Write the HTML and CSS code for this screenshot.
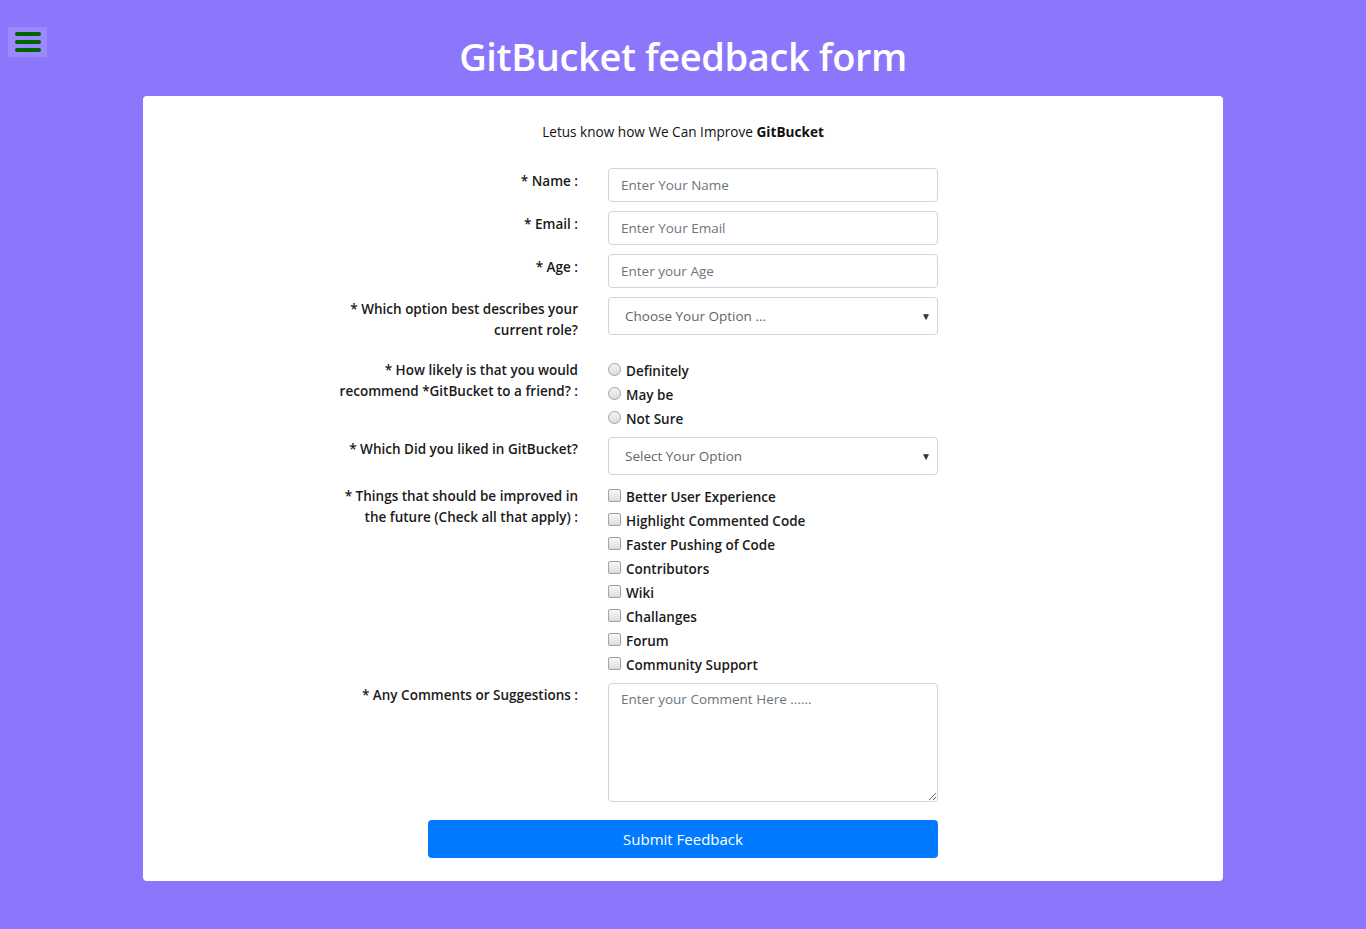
FILE: index.html
```html
<!DOCTYPE html>
<html lang="en">
<head>
<meta charset="utf-8">
<title>GitBucket feedback form</title>
<link rel="stylesheet" href="styles.css">
</head>
<body>
<button class="menu-btn" type="button" aria-label="Menu">
  <span class="bar"></span><span class="bar"></span><span class="bar"></span>
</button>
<h1 class="title">GitBucket feedback form</h1>
<main class="card">
  <p class="intro">Letus know how We Can Improve <b>GitBucket</b></p>
  <form class="form">
    <div class="row">
      <label class="lbl" for="name">* Name :</label>
      <input class="field" id="name" type="text" placeholder="Enter Your Name">
    </div>
    <div class="row">
      <label class="lbl" for="email">* Email :</label>
      <input class="field" id="email" type="email" placeholder="Enter Your Email">
    </div>
    <div class="row">
      <label class="lbl" for="age">* Age :</label>
      <input class="field" id="age" type="text" placeholder="Enter your Age">
    </div>
    <div class="row row-select">
      <label class="lbl" for="role">* Which option best describes your current role?</label>
      <div class="select"><span>Choose Your Option ...</span><i class="caret">▼</i></div>
    </div>
    <div class="row row-list">
      <div class="lbl">* How likely is that you would recommend *GitBucket to a friend? :</div>
      <div class="opts">
        <label class="opt"><span class="radio"></span>Definitely</label>
        <label class="opt"><span class="radio"></span>May be</label>
        <label class="opt"><span class="radio"></span>Not Sure</label>
      </div>
    </div>
    <div class="row row-select2">
      <label class="lbl">* Which Did you liked in GitBucket?</label>
      <div class="select"><span>Select Your Option</span><i class="caret">▼</i></div>
    </div>
    <div class="row row-list2">
      <div class="lbl">* Things that should be improved in the future (Check all that apply) :</div>
      <div class="opts">
        <label class="opt"><span class="check"></span>Better User Experience</label>
        <label class="opt"><span class="check"></span>Highlight Commented Code</label>
        <label class="opt"><span class="check"></span>Faster Pushing of Code</label>
        <label class="opt"><span class="check"></span>Contributors</label>
        <label class="opt"><span class="check"></span>Wiki</label>
        <label class="opt"><span class="check"></span>Challanges</label>
        <label class="opt"><span class="check"></span>Forum</label>
        <label class="opt"><span class="check"></span>Community Support</label>
      </div>
    </div>
    <div class="row row-text">
      <label class="lbl" for="comment">* Any Comments or Suggestions :</label>
      <textarea class="area" id="comment" placeholder="Enter your Comment Here ......"></textarea>
    </div>
    <div class="submit-row">
      <button class="submit" type="button">Submit Feedback</button>
    </div>
  </form>
</main>
</body>
</html>
```

FILE: styles.css
```css
* { box-sizing: border-box; }
html, body { margin: 0; padding: 0; }
body {
  background: #8c77fc;
  font-family: "Open Sans", "Noto Sans", sans-serif;
  color: #212529;
  position: relative;
  min-height: 929px;
}
.menu-btn {
  position: absolute;
  left: 8px;
  top: 27px;
  width: 39px;
  height: 30px;
  border: 0;
  padding: 0;
  background: rgba(255, 255, 255, 0.13);
  display: flex;
  flex-direction: column;
  align-items: center;
  justify-content: center;
  gap: 4px;
}
.bar {
  display: block;
  width: 26px;
  height: 4px;
  border-radius: 2px;
  background: #006400;
}
.title {
  margin: 0;
  padding-top: 31px;
  height: 96px;
  text-align: center;
  color: #fff;
  font-size: 38px;
  font-weight: 600;
  line-height: 50px;
  letter-spacing: -0.4px;
}
.card {
  width: 1080px;
  margin: 0 auto;
  background: #fff;
  border-radius: 4px;
  padding: 26px 0 23px;
  height: 785px;
}
.intro {
  margin: 0 0 26px;
  text-align: center;
  font-size: 13.6px;
  line-height: 20px;
  color: #111;
}
.intro b { font-weight: 700; }
.form {
  margin-left: 185px;
  width: 610px;
}
.row {
  display: grid;
  grid-template-columns: 250px 330px;
  column-gap: 30px;
  margin-bottom: 9px;
  align-items: start;
}
.lbl {
  text-align: right;
  font-size: 13.5px;
  font-weight: 600;
  line-height: 21px;
  padding-top: 3px;
  color: #1a1a1a;
}
.field {
  height: 34px;
  width: 330px;
  border: 1px solid #ced4da;
  border-radius: 4px;
  padding: 0 12px;
  font-family: inherit;
  font-size: 13.5px;
  color: #495057;
}
.field::placeholder, .area::placeholder { color: #6c757d; }
.select {
  height: 38px;
  border: 1px solid #ced4da;
  border-radius: 4px;
  display: flex;
  align-items: center;
  justify-content: space-between;
  padding: 0 6px 0 16px;
  font-size: 13.5px;
  color: #5f656b;
}
.caret {
  font-style: normal;
  font-size: 10px;
  color: #333;
}
.row-select { margin-bottom: 18px; }
.row-select .lbl { padding-top: 2px; }
.row-list { margin-bottom: 6px; }
.row-list .lbl { padding-top: 1px; }
.row-select2 { margin-bottom: 10px; }
.row-select2 .lbl { padding-top: 2px; }
.opts {
  display: flex;
  flex-direction: column;
}
.opt {
  display: flex;
  align-items: center;
  height: 24px;
  font-size: 13.5px;
  font-weight: 600;
  color: #1a1a1a;
}
.radio {
  width: 13px;
  height: 13px;
  border-radius: 50%;
  border: 1px solid #a0a0a0;
  background: linear-gradient(#f4f4f4, #dcdcdc);
  margin-right: 5px;
  margin-top: -4px;
}
.check {
  width: 13px;
  height: 13px;
  border-radius: 2px;
  border: 1px solid #a0a0a0;
  background: linear-gradient(#f6f6f6, #dedede);
  margin-right: 5px;
  margin-top: -4px;
}
.row-list2 { margin-bottom: 6px; }
.row-list2 .lbl { padding-top: 1px; }
.area {
  display: block;
  width: 330px;
  height: 119px;
  border: 1px solid #ced4da;
  border-radius: 4px;
  padding: 6px 12px;
  font-family: inherit;
  font-size: 13.5px;
  resize: vertical;
}
.row-text .lbl { padding-top: 2px; }
.row-text { margin-bottom: 18px; }
.submit-row { padding-left: 100px; }
.submit {
  width: 510px;
  height: 38px;
  border: 0;
  border-radius: 4px;
  background: #007bff;
  color: #fff;
  font-family: inherit;
  font-size: 15px;
}
```
